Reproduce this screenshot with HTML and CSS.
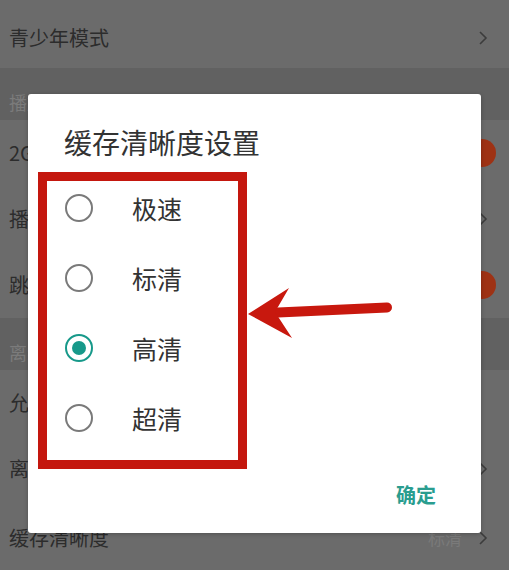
FILE: index.html
```html
<!DOCTYPE html>
<html lang="zh-CN">
<head>
<meta charset="utf-8">
<title>缓存清晰度设置</title>
<link rel="stylesheet" href="styles.css">
</head>
<body>
<div class="screen">
  <div class="list">
    <div class="row row-first"><span class="label">青少年模式</span><svg class="chev" viewBox="0 0 10 16"><polyline points="2,2 8,8 2,14"/></svg></div>
    <div class="band"><span>播放设置</span></div>
    <div class="row"><span class="label">2G/3G/4G网络自动播放</span><span class="knob"></span></div>
    <div class="row"><span class="label">播放器设置</span><svg class="chev" viewBox="0 0 10 16"><polyline points="2,2 8,8 2,14"/></svg></div>
    <div class="row"><span class="label">跳过片头片尾</span><span class="knob"></span></div>
    <div class="band"><span>离线设置</span></div>
    <div class="row"><span class="label">允许非WiFi网络缓存</span></div>
    <div class="row"><span class="label">离线缓存位置</span><svg class="chev" viewBox="0 0 10 16"><polyline points="2,2 8,8 2,14"/></svg></div>
    <div class="row row-last"><span class="label">缓存清晰度</span><span class="value">标清</span><svg class="chev" viewBox="0 0 10 16"><polyline points="2,2 8,8 2,14"/></svg></div>
  </div>

  <div class="dialog">
    <div class="title">缓存清晰度设置</div>
    <div class="redbox">
      <div class="opt"><span class="radio"></span><span class="opt-text">极速</span></div>
      <div class="opt"><span class="radio"></span><span class="opt-text">标清</span></div>
      <div class="opt"><span class="radio on"></span><span class="opt-text">高清</span></div>
      <div class="opt"><span class="radio"></span><span class="opt-text">超清</span></div>
    </div>
    <div class="actions"><span class="ok">确定</span></div>
  </div>

  <svg class="arrow" viewBox="0 0 509 570" width="509" height="570">
    <line x1="278" y1="312.5" x2="387" y2="307.5" stroke="#c8180e" stroke-width="10" stroke-linecap="round"/>
    <polygon points="248,314 289,288 275,312 292,338" fill="#c8180e"/>
  </svg>
</div>
</body>
</html>
```
FILE: styles.css
```css
* { box-sizing: border-box; }
html, body { margin: 0; padding: 0; }
body {
  font-family: "Noto Sans CJK SC", "Noto Sans", sans-serif;
  background: #6b6b6b;
}
.screen {
  position: relative;
  width: 509px;
  height: 570px;
  overflow: hidden;
  background: #6b6b6b;
}
.list { display: flex; flex-direction: column; }
.row {
  height: 66px;
  display: flex;
  align-items: center;
  padding: 0 21px 0 9px;
  color: #2c2c2c;
  font-size: 20px;
  line-height: 22px;
}
.row-first { height: 68px; padding-top: 8px; }
.row-last { padding-top: 6px; }
.label { flex: 1; white-space: nowrap; }
.band {
  height: 52px;
  background: #616161;
  display: flex;
  align-items: flex-end;
  padding: 0 9px 9px;
  color: #7b7b7b;
  font-size: 18px;
  line-height: 18px;
}
.chev {
  width: 10px;
  height: 16px;
  fill: none;
  stroke: #3c3c3c;
  stroke-width: 1.6;
}
.value { color: #7a7a7a; font-size: 17px; margin-right: 16px; }
.knob {
  width: 28px;
  height: 28px;
  border-radius: 50%;
  background: #9e3214;
  margin-right: -8px;
}
.dialog {
  position: absolute;
  left: 28px;
  top: 94px;
  width: 453px;
  height: 439px;
  background: #fff;
  border-radius: 3px;
  box-shadow: 0 1px 4px rgba(0,0,0,0.25);
  display: flex;
  flex-direction: column;
}
.title {
  padding: 30px 0 0 36px;
  height: 78px;
  font-size: 28px;
  line-height: 36px;
  color: #333;
  font-weight: 400;
}
.redbox {
  margin-left: 10px;
  width: 209px;
  height: 297px;
  border: 9px solid #c4170e;
  display: flex;
  flex-direction: column;
  gap: 16px;
}
.opt {
  height: 54px;
  display: flex;
  align-items: center;
  padding-left: 18px;
}
.radio {
  width: 28px;
  height: 28px;
  border-radius: 50%;
  border: 2.5px solid #7a7a7a;
  display: flex;
  align-items: center;
  justify-content: center;
  margin-right: 39px;
}
.radio.on { border-color: #17998a; }
.radio.on::after {
  content: "";
  width: 14px;
  height: 14px;
  border-radius: 50%;
  background: #17998a;
}
.opt-text { font-size: 25px; color: #333; line-height: 30px; }
.actions {
  flex: 1;
  display: flex;
  justify-content: flex-end;
  align-items: flex-start;
  padding: 12px 45px 0 0;
}
.ok {
  font-size: 20px;
  font-weight: 700;
  color: #2a9d8f;
  line-height: 28px;
}
.arrow {
  position: absolute;
  left: 0;
  top: 0;
  pointer-events: none;
}
```
